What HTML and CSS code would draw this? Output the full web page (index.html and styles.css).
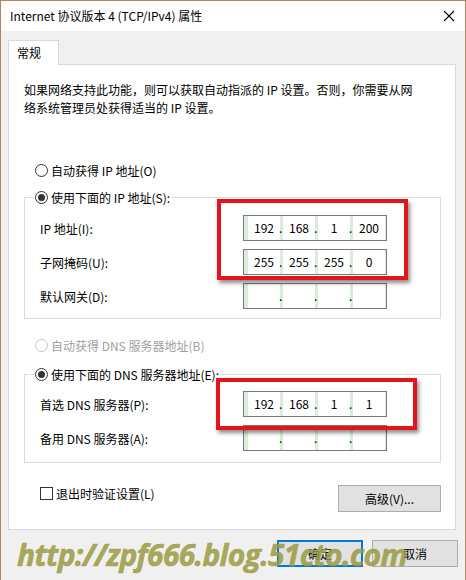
FILE: index.html
```html
<!DOCTYPE html>
<html lang="zh-CN">
<head>
    <meta charset="UTF-8">
    <title>Internet 协议版本 4 (TCP/IPv4) 属性</title>
    <link rel="stylesheet" href="styles.css">
</head>
<body>
    <div class="window">
        <div class="titlebar">
            <span class="title">Internet 协议版本 4 (TCP/IPv4) 属性</span>
            <svg class="close" width="12" height="12" viewBox="0 0 12 12">
                <path d="M1 1 L11 11 M11 1 L1 11" stroke="#000" stroke-width="1.1" fill="none"/>
            </svg>
        </div>

        <div class="content">
            <div class="tabs">
                <div class="tab">常规</div>
            </div>

            <div class="panel">
                <p class="intro">如果网络支持此功能，则可以获取自动指派的 IP 设置。否则，你需要从网<br>络系统管理员处获得适当的 IP 设置。</p>

                <label class="radio-row first">
                    <span class="radio"></span>自动获得 IP 地址(O)
                </label>

                <fieldset class="group ip-group">
                    <legend><span class="radio checked"></span>使用下面的 IP 地址(S):</legend>
                    <div class="field-row">
                        <span>IP 地址(I):</span>
                        <div class="ipbox">
                            <span class="seg">192</span><span class="dot">.</span><span class="seg">168</span><span class="dot">.</span><span class="seg">1</span><span class="dot">.</span><span class="seg">200</span>
                        </div>
                    </div>
                    <div class="field-row">
                        <span>子网掩码(U):</span>
                        <div class="ipbox">
                            <span class="seg">255</span><span class="dot">.</span><span class="seg">255</span><span class="dot">.</span><span class="seg">255</span><span class="dot">.</span><span class="seg">0</span>
                        </div>
                    </div>
                    <div class="field-row">
                        <span>默认网关(D):</span>
                        <div class="ipbox">
                            <span class="seg"></span><span class="dot">.</span><span class="seg"></span><span class="dot">.</span><span class="seg"></span><span class="dot">.</span><span class="seg"></span>
                        </div>
                    </div>
                </fieldset>

                <label class="radio-row disabled">
                    <span class="radio"></span>自动获得 DNS 服务器地址(B)
                </label>

                <fieldset class="group dns-group">
                    <legend><span class="radio checked"></span>使用下面的 DNS 服务器地址(E):</legend>
                    <div class="field-row">
                        <span>首选 DNS 服务器(P):</span>
                        <div class="ipbox">
                            <span class="seg">192</span><span class="dot">.</span><span class="seg">168</span><span class="dot">.</span><span class="seg">1</span><span class="dot">.</span><span class="seg">1</span>
                        </div>
                    </div>
                    <div class="field-row">
                        <span>备用 DNS 服务器(A):</span>
                        <div class="ipbox">
                            <span class="seg"></span><span class="dot">.</span><span class="seg"></span><span class="dot">.</span><span class="seg"></span><span class="dot">.</span><span class="seg"></span>
                        </div>
                    </div>
                </fieldset>

                <div class="bottom-row">
                    <label class="check-row"><span class="checkbox"></span>退出时验证设置(L)</label>
                    <button class="btn advanced">高级(V)...</button>
                </div>
            </div>

            <div class="actions">
                <button class="btn primary">确定</button>
                <button class="btn">取消</button>
            </div>
        </div>

        <!-- annotations drawn over the dialog -->
        <div class="mark mark-ip"></div>
        <div class="mark mark-dns"></div>
        <div class="watermark">http://zpf666.blog.51cto.com</div>
    </div>
</body>
</html>
```

FILE: styles.css
```css
* {
    box-sizing: border-box;
}

body {
    margin: 0;
    font-family: "Noto Sans CJK SC", "Noto Sans", sans-serif;
    font-size: 12px;
    color: #000;
    background: #f0f0f0;
}

.window {
    position: relative;
    width: 466px;
    height: 580px;
    border: 1px solid #b08361;
    border-bottom: none;
    background: #f0f0f0;
    overflow: hidden;
}

.titlebar {
    display: flex;
    align-items: center;
    justify-content: space-between;
    height: 30px;
    padding: 0 10px 0 9px;
    background: #fff;
}

.title {
    font-size: 12px;
    line-height: 18px;
}

.content {
    padding: 9px 9px 0 7px;
}

.tabs {
    display: flex;
}

.tab {
    position: relative;
    z-index: 1;
    width: 51px;
    height: 25px;
    margin-bottom: -1px;
    padding: 3px 0 0 8px;
    line-height: 18px;
    background: #fff;
    border: 1px solid #d9d9d9;
    border-bottom: none;
}

.panel {
    background: #fff;
    border: 1px solid #d9d9d9;
    padding: 16px 14px 17px 15px;
}

.intro {
    margin: 0;
    line-height: 18px;
}

.radio-row {
    display: flex;
    align-items: center;
    height: 18px;
    padding-left: 11px;
}

.radio-row.first {
    margin-top: 44px;
}

.radio-row.disabled {
    margin-top: 17px;
    color: #a0a0a0;
}

.radio {
    display: inline-flex;
    align-items: center;
    justify-content: center;
    width: 13px;
    height: 13px;
    margin-right: 3px;
    border: 1px solid #333;
    border-radius: 50%;
    background: #fff;
}

.radio.checked::after {
    content: "";
    width: 7px;
    height: 7px;
    border-radius: 50%;
    background: #333;
}

.disabled .radio {
    border-color: #c4c4c4;
}

.group {
    margin: 9px 0 0 0;
    padding: 9px 0 9px 15px;
    border: 1px solid #dcdcdc;
}

.dns-group {
    margin-top: 11px;
    padding-top: 8px;
    padding-bottom: 11px;
}

.group legend {
    display: flex;
    align-items: center;
    height: 18px;
    margin-left: -6px;
    padding: 0 2px 0 1px;
}

.field-row {
    display: grid;
    grid-template-columns: 203px 144px;
    align-items: center;
    height: 26px;
}

.field-row + .field-row {
    margin-top: 8px;
}

.ipbox {
    display: flex;
    height: 26px;
    padding-left: 4px;
    border: 1px solid #7a7a7a;
    background: #d9eed8;
}

.seg {
    width: 32px;
    line-height: 24px;
    text-align: center;
    background: #fff;
}

.dot {
    width: 3px;
    line-height: 24px;
    text-indent: -1px;
    overflow: visible;
}

.bottom-row {
    display: flex;
    justify-content: space-between;
    align-items: flex-start;
    margin-top: 22px;
    padding-left: 16px;
}

.check-row {
    display: flex;
    align-items: center;
    height: 18px;
    margin-top: -1px;
}

.checkbox {
    width: 13px;
    height: 13px;
    margin-right: 3px;
    border: 1px solid #333;
    background: #fff;
}

.btn {
    width: 86px;
    height: 27px;
    padding: 0;
    font-family: inherit;
    font-size: 12px;
    color: #000;
    background: #e1e1e1;
    border: 1px solid #adadad;
}

.btn.advanced {
    width: 103px;
}

.btn.primary {
    border: 2px solid #0078d7;
}

.actions {
    display: flex;
    justify-content: flex-end;
    gap: 9px;
    margin: 10px -2px 0 0;
}

.mark {
    position: absolute;
    border: 4px solid #e3141b;
    box-shadow: 2px 3px 4px rgba(0, 0, 0, 0.45);
}

.mark-ip {
    left: 216px;
    top: 198px;
    width: 191px;
    height: 81px;
}

.mark-dns {
    left: 215px;
    top: 377px;
    width: 201px;
    height: 52px;
}

.watermark {
    position: absolute;
    left: 16px;
    top: 536px;
    font-family: "Open Sans", sans-serif;
    font-size: 30px;
    font-weight: bold;
    font-style: italic;
    line-height: 36px;
    letter-spacing: -0.7px;
    color: rgba(155, 155, 65, 0.85);
    -webkit-text-stroke: 0.6px rgba(155, 155, 65, 0.85);
    white-space: nowrap;
}
```
